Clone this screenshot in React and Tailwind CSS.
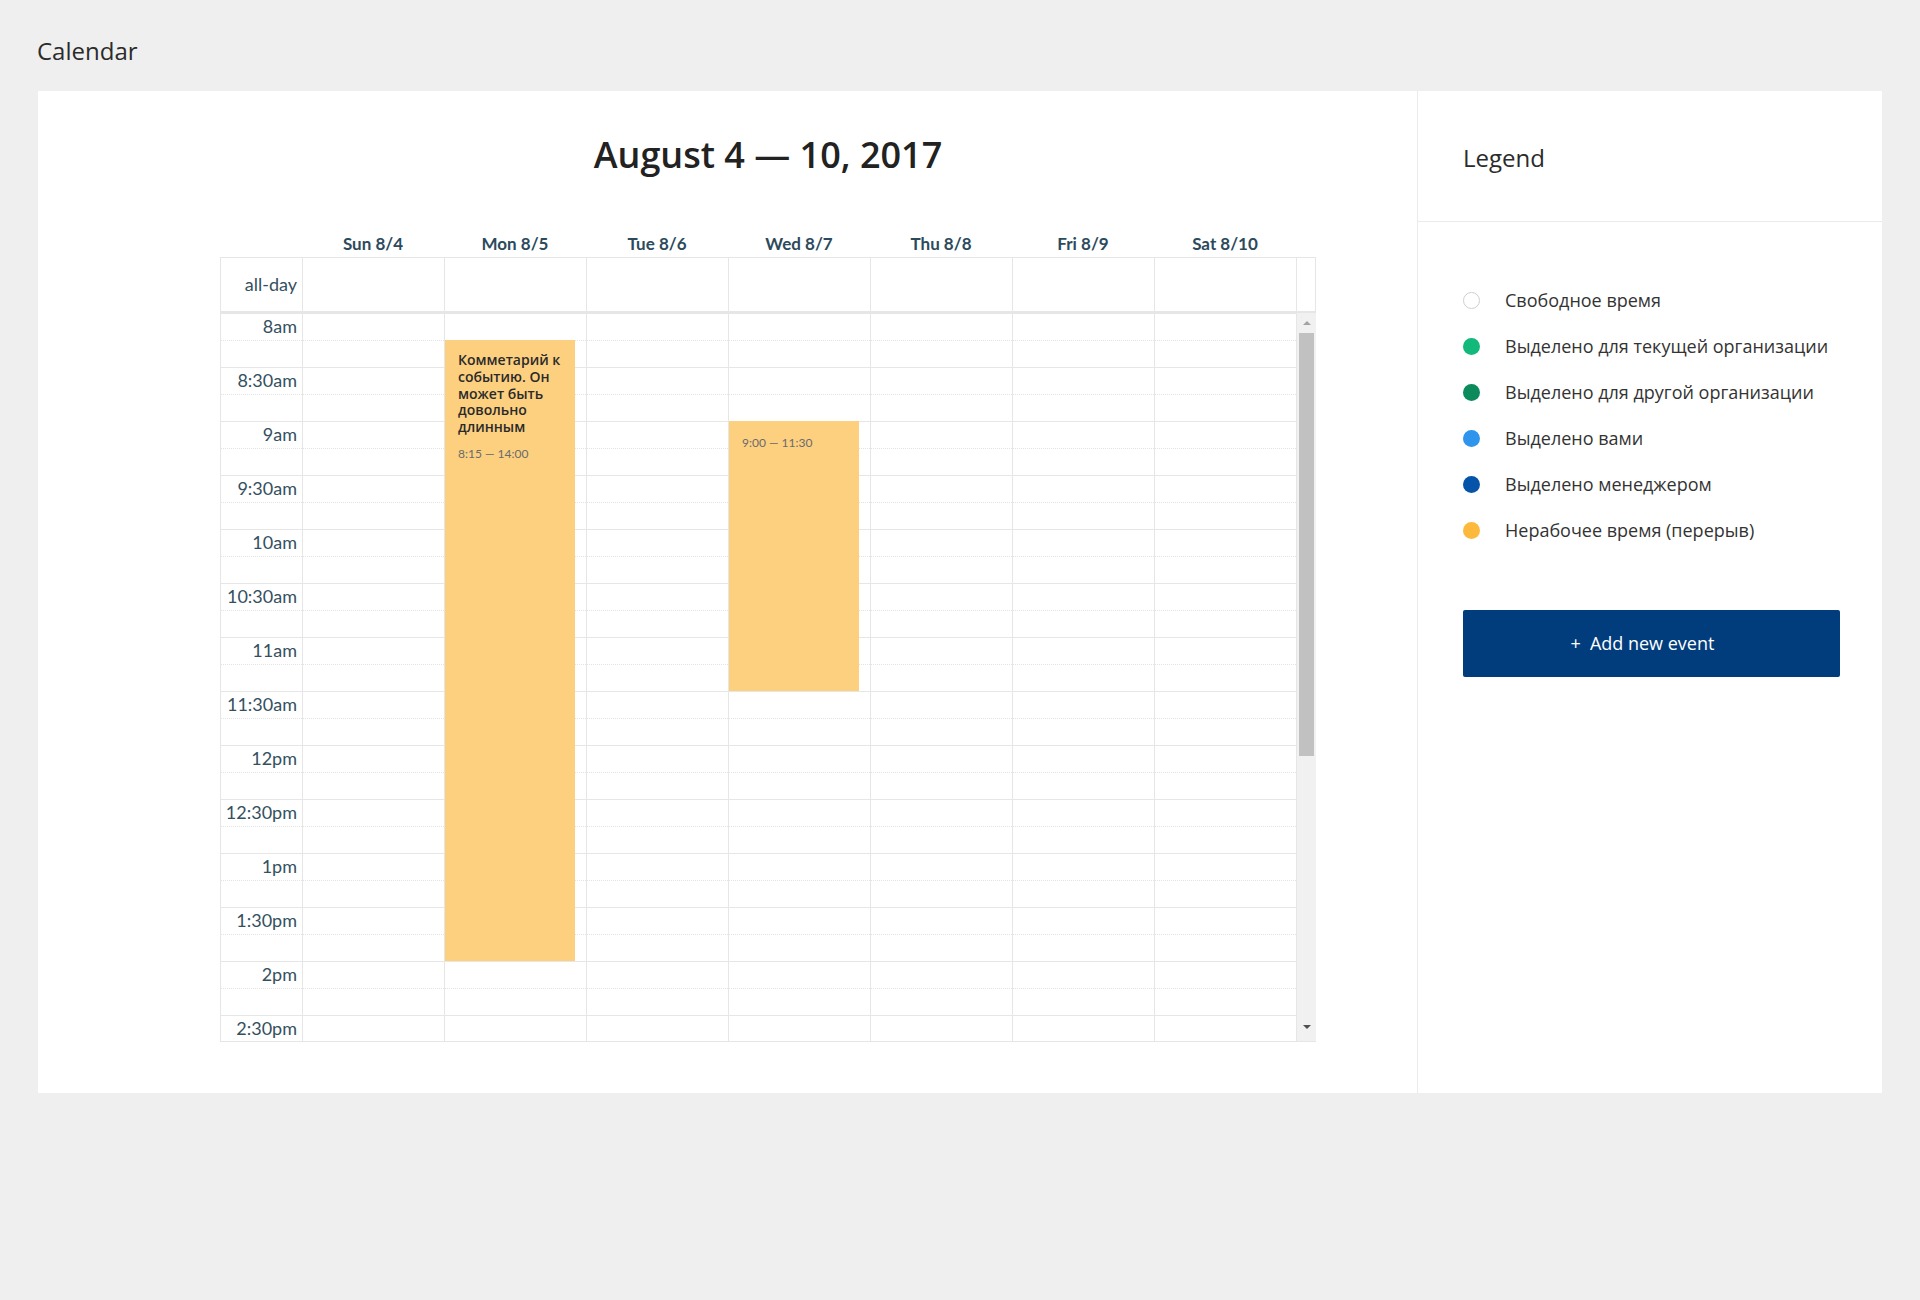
const days = ['Sun 8/4', 'Mon 8/5', 'Tue 8/6', 'Wed 8/7', 'Thu 8/8', 'Fri 8/9', 'Sat 8/10'];
const slots = ['8am', '8:30am', '9am', '9:30am', '10am', '10:30am', '11am', '11:30am', '12pm', '12:30pm', '1pm', '1:30pm', '2pm', '2:30pm'];
const HOUR = 108;

const events = [
    { day: 1, start: 8.25, end: 14, title: 'Комметарий к событию. Он может быть довольно длинным', time: '8:15 — 14:00' },
    { day: 3, start: 9, end: 11.5, time: '9:00 — 11:30' },
];

const legend = [
    { label: 'Свободное время', dot: 'bg-white border border-[#cfcfcf]' },
    { label: 'Выделено для текущей организации', dot: 'bg-[#12b97a]' },
    { label: 'Выделено для другой организации', dot: 'bg-[#0b8a5c]' },
    { label: 'Выделено вами', dot: 'bg-[#2e94ec]' },
    { label: 'Выделено менеджером', dot: 'bg-[#0654aa]' },
    { label: 'Нерабочее время (перерыв)', dot: 'bg-[#fdb93c]' },
];

function Event({ ev }) {
    return (
        <div
            className="absolute left-0 w-[130px] bg-[#fdd080] pl-[13px] pr-[4px] pt-[12px]"
            style={{ top: (ev.start - 8) * HOUR, height: (ev.end - ev.start) * HOUR }}
        >
            {ev.title && (
                <p className="font-['Open_Sans',sans-serif] text-[14px] leading-[16.8px] font-semibold text-[#2a2a2a] mb-[10px]">{ev.title}</p>
            )}
            <p className={`font-['Lato',sans-serif] text-[12px] leading-[15px] text-[#6b6b6b] ${ev.title ? '' : 'pt-[2px]'}`}>{ev.time}</p>
        </div>
    );
}

function WeekGrid() {
    return (
        <div className="font-['Lato',sans-serif] text-[#34505f]">
            <div className="grid grid-cols-[82px_repeat(7,142px)_1fr] h-[26px] items-center text-center text-[17px] font-bold text-[#2c4a5c]">
                <div />
                {days.map((d) => (
                    <div key={d}>{d}</div>
                ))}
                <div />
            </div>
            <div className="grid grid-cols-[81px_repeat(7,142px)_1fr] h-[56px] border border-b-2 border-[#e6e6e6]">
                <div className="flex items-center justify-end pr-[5px] text-[18px]">all-day</div>
                {days.map((d) => (
                    <div key={d} className="border-l border-[#e6e6e6]" />
                ))}
                <div className="border-l border-[#e6e6e6]" />
            </div>
            <div className="flex h-[729px] border-l border-b border-[#e6e6e6]">
                <div className="relative w-[1075px] overflow-hidden">
                    {slots.map((s) => (
                        <div key={s} className="h-[54px] border-t border-[#e6e6e6]">
                            <div className="h-[26px] w-[81px] pr-[5px] text-right text-[18px] leading-[24px]">{s}</div>
                            <div className="border-t border-dotted border-[#e3e3e3]" />
                        </div>
                    ))}
                    <div className="absolute inset-y-0 left-[81px] grid grid-cols-[repeat(7,142px)]">
                        {days.map((d, i) => (
                            <div key={d} className="relative border-l border-[#e6e6e6]">
                                {events.filter((e) => e.day === i).map((e) => (
                                    <Event key={e.time} ev={e} />
                                ))}
                            </div>
                        ))}
                    </div>
                </div>
                <div className="flex w-[20px] flex-col bg-[#f1f1f1] border-l border-[#e6e6e6]">
                    <div className="flex h-[20px] items-center justify-center">
                        <div className="h-0 w-0 border-x-[4px] border-b-[4px] border-x-transparent border-b-[#a3a3a3]" />
                    </div>
                    <div className="mx-[2px] h-[423px] bg-[#c1c1c1]" />
                    <div className="flex-1" />
                    <div className="flex h-[22px] items-center justify-center pb-[6px]">
                        <div className="h-0 w-0 border-x-[4px] border-t-[4px] border-x-transparent border-t-[#505050]" />
                    </div>
                </div>
            </div>
        </div>
    );
}

export default function App() {
    return (
        <div className="min-h-[1300px] bg-[#efefef] font-['Open_Sans',sans-serif] text-[#333]">
            <h1 className="pl-[37px] pt-[36px] pb-[25px] text-[24px] leading-[30px] text-[#2b2b2b]">Calendar</h1>
            <div className="mx-[38px] flex h-[1002px] bg-white">
                <section className="w-[1380px] shrink-0 border-r border-[#ebebeb] pt-[44px]">
                    <div className="ml-[182px] w-[1096px]">
                        <h2 className="h-[40px] mb-[56px] text-center text-[36px] leading-[40px] font-semibold text-[#222]">
                            August 4 — 10, 2017
                        </h2>
                        <WeekGrid />
                    </div>
                </section>
                <aside className="min-w-0 flex-1">
                    <div className="h-[131px] border-b border-[#ebebeb] pl-[45px] pt-[52px]">
                        <h2 className="text-[24px] leading-[30px] text-[#2b2b2b]">Legend</h2>
                    </div>
                    <div className="pl-[45px] pt-[55px]">
                        <ul>
                            {legend.map((l) => (
                                <li key={l.label} className="flex h-[46px] items-center">
                                    <span className={`h-[17px] w-[17px] shrink-0 rounded-full ${l.dot}`} />
                                    <span className="ml-[25px] text-[18px] text-[#333]">{l.label}</span>
                                </li>
                            ))}
                        </ul>
                        <button className="mt-[57px] flex h-[67px] w-[377px] items-center justify-center rounded-[2px] bg-[#013d7c] pr-[18px] text-[18px] text-white">
                            <span className="mr-[9px]">+</span>Add new event
                        </button>
                    </div>
                </aside>
            </div>
        </div>
    );
}
